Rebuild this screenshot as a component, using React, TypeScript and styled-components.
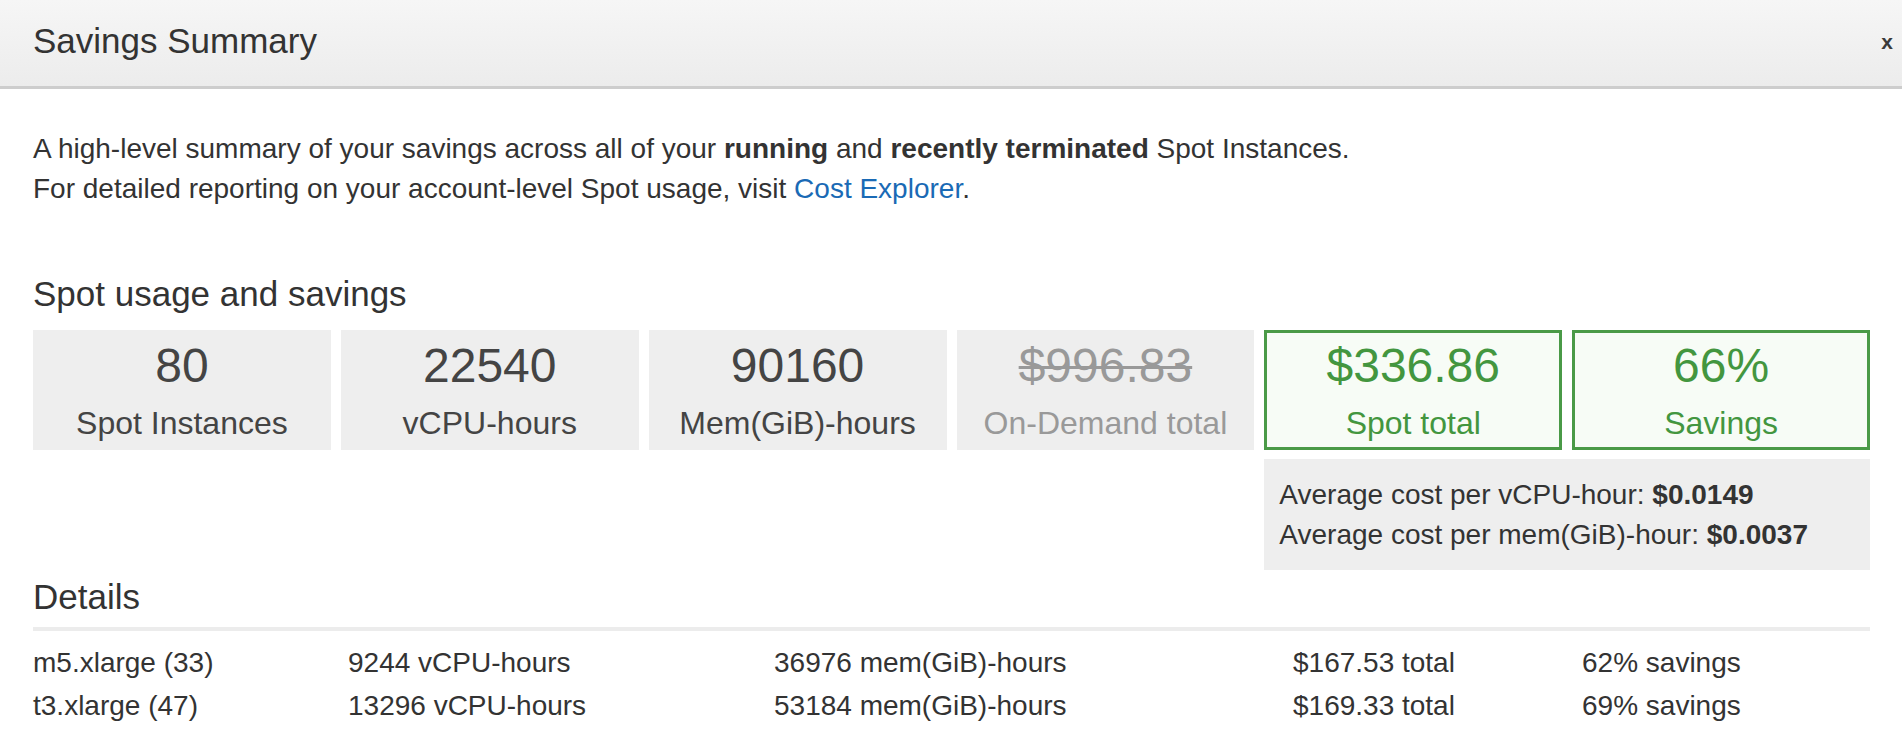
import styled, { createGlobalStyle } from 'styled-components';

const GlobalStyle = createGlobalStyle`
  html,
  body {
    margin: 0;
    padding: 0;
    background: #fff;
  }

  body {
    font-family: 'Liberation Sans', Helvetica, Arial, sans-serif;
    color: #333;
  }
`;

type Stat = {
  value: string;
  label: string;
  tone?: 'plain' | 'muted' | 'good';
};

const stats: Stat[] = [
  { value: '80', label: 'Spot Instances' },
  { value: '22540', label: 'vCPU-hours' },
  { value: '90160', label: 'Mem(GiB)-hours' },
  { value: '$996.83', label: 'On-Demand total', tone: 'muted' },
  { value: '$336.86', label: 'Spot total', tone: 'good' },
  { value: '66%', label: 'Savings', tone: 'good' },
];

const details = [
  ['m5.xlarge (33)', '9244 vCPU-hours', '36976 mem(GiB)-hours', '$167.53 total', '62% savings'],
  ['t3.xlarge (47)', '13296 vCPU-hours', '53184 mem(GiB)-hours', '$169.33 total', '69% savings'],
];

const App = () => {
  return (
    <>
      <GlobalStyle />
      <Modal>
        <Header>
          <Title>Savings Summary</Title>
          <Close aria-label="Close">x</Close>
        </Header>

        <Body>
          <Intro>
            A high-level summary of your savings across all of your <b>running</b> and{' '}
            <b>recently terminated</b> Spot Instances.
            <br />
            For detailed reporting on your account-level Spot usage, visit{' '}
            <Link href="#cost-explorer">Cost Explorer</Link>.
          </Intro>

          <SectionTitle>Spot usage and savings</SectionTitle>
          <StatGrid>
            {stats.map((s) => (
              <Card key={s.label} $tone={s.tone ?? 'plain'}>
                <Value $struck={s.tone === 'muted'}>{s.value}</Value>
                <Label>{s.label}</Label>
              </Card>
            ))}
            <Averages>
              <div>
                Average cost per vCPU-hour: <b>$0.0149</b>
              </div>
              <div>
                Average cost per mem(GiB)-hour: <b>$0.0037</b>
              </div>
            </Averages>
          </StatGrid>

          <DetailsTitle>Details</DetailsTitle>
          <Divider />
          <DetailTable>
            {details.map((row) => (
              <DetailRow key={row[0]}>
                {row.map((cell) => (
                  <span key={cell}>{cell}</span>
                ))}
              </DetailRow>
            ))}
          </DetailTable>
        </Body>
      </Modal>
    </>
  );
};

const Modal = styled.div`
  width: 1902px;
  min-height: 752px;
  background: #fff;
`;

const Header = styled.header`
  height: 89px;
  box-sizing: border-box;
  display: flex;
  align-items: center;
  justify-content: space-between;
  padding: 0 9px 4px 33px;
  background: linear-gradient(180deg, #f6f6f6 0%, #ececec 100%);
  border-bottom: 3px solid #cdcdcd;
`;

const Title = styled.h1`
  margin: 0;
  font-size: 35px;
  font-weight: normal;
  color: #333;
`;

const Close = styled.button`
  border: none;
  background: none;
  padding: 0;
  font-family: inherit;
  font-size: 21px;
  font-weight: bold;
  line-height: 1;
  color: #3a3a3a;
  cursor: pointer;
`;

const Body = styled.div`
  padding: 40px 32px 0 33px;
`;

const Intro = styled.p`
  margin: 0;
  font-size: 28px;
  line-height: 40px;
  color: #333;

  b {
    font-weight: bold;
  }
`;

const Link = styled.a`
  color: #1a6ab5;
  text-decoration: none;
`;

const SectionTitle = styled.h2`
  margin: 65px 0 16px;
  font-size: 35px;
  line-height: 40px;
  font-weight: normal;
  color: #333;
`;

const StatGrid = styled.div`
  display: grid;
  grid-template-columns: repeat(6, 1fr);
  column-gap: 10px;
  row-gap: 9px;
`;

const Card = styled.div<{ $tone: 'plain' | 'muted' | 'good' }>`
  height: 120px;
  box-sizing: border-box;
  padding-top: ${({ $tone }) => ($tone === 'good' ? 5 : 8)}px;
  text-align: center;
  background: ${({ $tone }) => ($tone === 'good' ? '#f7fcf6' : '#eeeeee')};
  border: ${({ $tone }) => ($tone === 'good' ? '3px solid #4a9a47' : 'none')};
  color: ${({ $tone }) =>
    $tone === 'good' ? '#43963f' : $tone === 'muted' ? '#999' : '#444'};
`;

const Value = styled.div<{ $struck: boolean }>`
  font-size: 48px;
  line-height: 56px;
  text-decoration: ${({ $struck }) => ($struck ? 'line-through' : 'none')};
  text-decoration-thickness: 3px;
`;

const Label = styled.div`
  margin-top: 7px;
  font-size: 32px;
  line-height: 44px;
`;

const Averages = styled.div`
  grid-column: 5 / span 2;
  box-sizing: border-box;
  height: 111px;
  padding: 16px 15px 0;
  background: #eeeeee;
  font-size: 28px;
  line-height: 40px;
  color: #333;
`;

const DetailsTitle = styled.h2`
  margin: 7px 0 10px;
  font-size: 35px;
  line-height: 40px;
  font-weight: normal;
  color: #333;
`;

const Divider = styled.div`
  height: 4px;
  background: #ececec;
`;

const DetailTable = styled.div`
  padding-top: 10px;
`;

const DetailRow = styled.div`
  display: grid;
  grid-template-columns: 315px 426px 519px 289px 1fr;
  font-size: 28px;
  line-height: 43px;
  color: #333;
`;

export default App;
